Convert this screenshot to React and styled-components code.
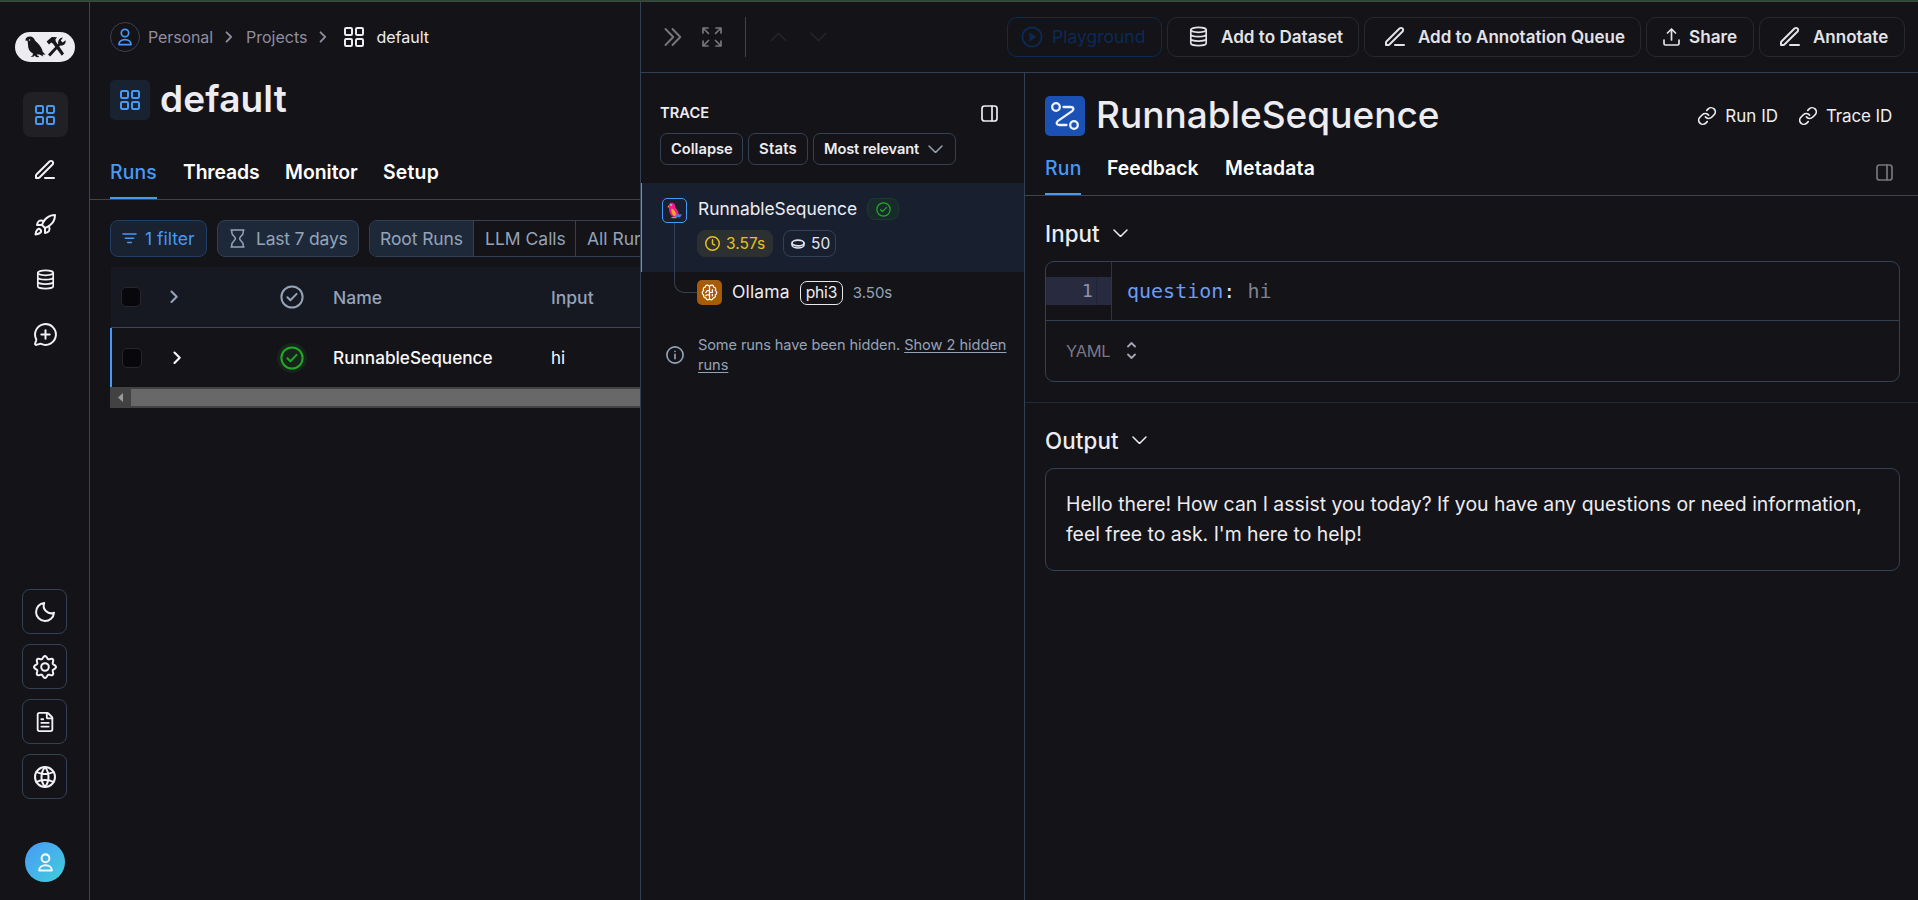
import React from "react";
import styled, { createGlobalStyle, css } from "styled-components";
import { Rocket, MessageCirclePlus, FileText } from "lucide-react";

const Global = createGlobalStyle`
  * { box-sizing: border-box; }
  body { margin: 0; background: #141317; color: #ececf1; overflow: hidden;
    font-family: Inter, "Liberation Sans", sans-serif; }
`;

const line = "#334155";
const blue = "#4799f8";
const slate = "#94a3b8";

/* ---------- shared ---------- */
const Svg = styled.svg`
  display: block; flex: none; fill: none; stroke: currentColor;
  stroke-linecap: round; stroke-linejoin: round;
  margin-left: ${p => p.$ml || 0}px;
`;
const Icon = ({ s = 24, vb = "0 0 24 24", w = 2, h, children, ...r }) => (
  <Svg width={s} height={h || s} viewBox={vb} strokeWidth={w} {...r}>{children}</Svg>
);
const GridIcon = p => (
  <Icon {...p}>
    {[[3, 3], [14, 3], [3, 14], [14, 14]].map(([x, y]) => <rect key={x + "-" + y} x={x} y={y} width="7" height="7" rx="1.2" />)}
  </Icon>
);
const PenIcon = p => (
  <Icon {...p}>
    <path d="M12 20H21M3 20H4.67C5.16 20 5.41 20 5.64 19.94C5.84 19.9 6.04 19.81 6.22 19.71C6.42 19.58 6.59 19.41 6.94 19.06L19.5 6.5C20.33 5.67 20.33 4.33 19.5 3.5C18.67 2.67 17.33 2.67 16.5 3.5L3.94 16.06C3.59 16.41 3.42 16.58 3.29 16.78C3.19 16.96 3.1 17.16 3.06 17.36C3 17.59 3 17.84 3 18.33V20Z" />
  </Icon>
);
const DbIcon = p => (
  <Icon w={1.9} {...p}>
    <ellipse cx="12" cy="4.4" rx="8.8" ry="2.8" />
    <path d="M3.2 4.4v15.2c0 1.5 3.9 2.8 8.8 2.8s8.8-1.3 8.8-2.8V4.4M3.2 9.4c0 1.5 3.9 2.8 8.8 2.8s8.8-1.3 8.8-2.8M3.2 14.5c0 1.5 3.9 2.8 8.8 2.8s8.8-1.3 8.8-2.8" />
  </Icon>
);
const UserIcon = p => (
  <Icon vb="0 0 14 18" w={1.7} {...p}>
    <circle cx="7" cy="5" r="3.7" />
    <path d="M1 16.6c0-3 2.5-4.9 6-4.9s6 1.9 6 4.9z" />
  </Icon>
);
const Chevron = ({ d = "right", ...p }) => {
  const paths = { down: "M1 1l6.5 6.5L14 1", up: "M1 7.5L7.5 1 14 7.5" };
  return d === "right"
    ? <Icon s={8.5} h={13.5} vb="0 0 8.5 13.5" w={2.1} {...p}><path d="M1.5 1.5l5.2 5.2-5.2 5.2" /></Icon>
    : <Icon s={15} h={8.5} vb="0 0 15 8.5" w={1.5} {...p}><path d={paths[d]} /></Icon>;
};
const CheckCircle = ({ s = 24, w = 2, ...p }) => (
  <Icon s={s} w={w} {...p}><circle cx="12" cy="12" r="10.6" /><path d="M7.4 12.3l3 3 6.2-6.4" /></Icon>
);
const LinkIcon = p => (
  <Icon {...p}>
    <path d="M10 13a5 5 0 0 0 7.54.54l3-3a5 5 0 0 0-7.07-7.07l-1.72 1.71" />
    <path d="M14 11a5 5 0 0 0-7.54-.54l-3 3a5 5 0 0 0 7.07 7.07l1.71-1.71" />
  </Icon>
);
const SplitIcon = p => (
  <Icon vb="0 0 17 17" w={1.7} s={17} {...p}><rect x="1" y="1" width="15" height="15" rx="2.6" /><path d="M11 1v15" /></Icon>
);
const gear = Array.from({ length: 97 }, (_, i) => {
  const t = (i / 96) * Math.PI * 2;
  const r = 9.7 + 1.3 * Math.cos(8 * t);
  return `${i ? "L" : "M"}${(12 + r * Math.cos(t)).toFixed(2)} ${(12 + r * Math.sin(t)).toFixed(2)}`;
}).join("") + "Z";

const Text = styled.span`
  white-space: nowrap;
  font-size: ${p => p.$s || 17.5}px;
  font-weight: ${p => p.$w || 400};
  letter-spacing: ${p => p.$ls || 0}px;
  color: ${p => p.$c || "inherit"};
  margin-left: ${p => p.$ml || 0}px;
`;
const Title = styled(Text)`line-height: 40px; padding-bottom: 2px;`;

/* ---------- frame ---------- */
const Page = styled.div`width: 1918px; height: 900px; display: flex; flex-direction: column; overflow: hidden; background: #141317;`;
const TopStrip = styled.div`height: 2px; flex: none; background: #2c4630; border-bottom: 1px solid #41464a;`;
const Shell = styled.div`flex: 1; display: flex; min-height: 0;`;

const Sidebar = styled.nav`
  width: 90px; flex: none; border-right: 1px solid #41434f; display: flex; flex-direction: column; align-items: center;
  padding-top: 30px; color: #f2f2f5;
`;
const NavItem = styled.div`
  width: 45px; height: 45px; border-radius: 8px; display: flex; align-items: center; justify-content: center; margin-bottom: 10px;
  ${p => p.$active && css`background: #212024; color: ${blue};`}
`;
const NavTop = styled.div`margin-top: 30px; padding-left: 1px;`;
const NavBottom = styled.div`margin-top: auto; display: flex; flex-direction: column; gap: 10px;`;
const SquareButton = styled.div`
  width: 45px; height: 45px; border: 1px solid ${line}; border-radius: 8px; display: flex; align-items: center; justify-content: center;
`;
const Avatar = styled.div`
  width: 40px; height: 40px; margin: 43px 0 18px 1px; border-radius: 50%; background: linear-gradient(135deg, #4a98f8, #3fd0da);
  display: flex; align-items: center; justify-content: center; color: #f4f8fb;
`;

/* ---------- project pane ---------- */
const Project = styled.main`width: 550px; flex: none; padding-left: 20px; overflow: hidden;`;
const Crumbs = styled.div`height: 30px; margin-top: 20px; display: flex; align-items: center; color: #8f8ea0;`;
const CrumbAvatar = styled.div`
  width: 30px; height: 30px; border-radius: 50%; border: 1px solid #3c4250; display: flex; align-items: center; justify-content: center; color: ${blue};
`;
const Heading = styled.div`height: 40px; margin-top: 28px; display: flex; align-items: center;`;
const HeadingIcon = styled.div`
  width: 40px; height: 40px; border-radius: 5px; display: flex; align-items: center; justify-content: center;
  background: ${p => p.$bg}; color: ${p => p.$c};
`;
const Tabs = styled.div`
  display: flex; gap: 26px; border-bottom: 1px solid #41434f; height: ${p => p.$h}px; margin: ${p => p.$m}; padding-left: 20px; color: #fff;
`;
const Tab = styled.div`
  width: ${p => p.$width}px; white-space: nowrap; font-size: 19.4px; font-weight: 600; line-height: ${p => p.$lh}px;
  letter-spacing: ${p => p.$ls || 0}px;
  ${p => p.$active && css`color: ${blue}; font-weight: 500; box-shadow: inset 0 -2px ${blue};`}
`;
const Filters = styled.div`display: flex; margin-top: 20px; height: 37px;`;
const FilterChip = styled.div`
  flex: none; width: ${p => p.$width}px; border-radius: 8px; display: flex; align-items: center; margin-right: 10px;
  border: 1px solid ${p => p.$blue ? "#1f3f66" : line}; background: ${p => p.$blue ? "#182230" : "#1d2938"};
  color: ${p => p.$blue ? blue : slate};
`;
const Segments = styled.div`display: flex; flex: none; border: 1px solid ${line}; border-radius: 8px; overflow: hidden; color: ${slate};`;
const Segment = styled.div`
  width: ${p => p.$width}px; flex: none; padding-left: ${p => p.$active ? 10 : 11}px; display: flex; align-items: center; border-right: 1px solid ${line};
  background: ${p => p.$active ? "#1d2938" : "transparent"};
`;
const Row = styled.div`
  display: flex; align-items: center; height: ${p => p.$head ? 61 : 59}px;
  ${p => p.$head
    ? css`margin: 10px 0 0 1px; padding-left: 10px; background: #161822; color: ${slate}; border-bottom: 1px solid #3a4560;`
    : css`padding-left: 10px; border-left: 2px solid ${blue}; color: #f8f8fa;`}
`;
const CheckBox = styled.div`width: 20px; height: 20px; border-radius: 5px; background: #08080c; border: 1px solid #26262b;`;
const Cell = styled.div`width: ${p => p.$width}px; flex: none; display: flex; align-items: center;`;
const StatusHalo = styled.div`
  width: 30px; height: 30px; border-radius: 50%; display: flex; align-items: center; justify-content: center;
  background: ${p => p.$on ? "#16241b" : "transparent"}; color: ${p => p.$on ? "#23a826" : slate};
`;
const ScrollTrack = styled.div`height: 21px; background: #424242; display: flex; align-items: center;`;
const ScrollThumb = styled.div`height: 17px; flex: 1; background: #686868; margin-left: 8px;`;

/* ---------- run panel ---------- */
const Panel = styled.section`flex: 1; min-width: 0; border-left: 1px solid ${line}; display: flex; flex-direction: column;`;
const Toolbar = styled.div`height: 71px; flex: none; border-bottom: 1px solid ${line}; display: flex; align-items: center; padding: 0 13px 1px 23px; color: #77767b;`;
const ToolSep = styled.div`width: 1px; height: 40px; background: #3b4455; margin: 0 24px 0 23px;`;
const Actions = styled.div`margin-left: auto; display: flex; gap: 5px;`;
const Action = styled.div`
  width: ${p => p.$width}px; height: 40px; border-radius: 10px; display: flex; align-items: center; padding-left: ${p => p.$pl}px;
  border: 1px solid ${p => p.$disabled ? "#0c2b55" : "#29282d"}; color: ${p => p.$disabled ? "#0b2a58" : "#e2e2e8"};
`;
const PanelBody = styled.div`flex: 1; display: flex; min-height: 0;`;
const Trace = styled.aside`width: 384px; flex: none; border-right: 1px solid ${line};`;
const TraceTitle = styled.div`display: flex; justify-content: space-between; align-items: center; height: 20px; margin: 30px 26px 0 19px;`;
const TraceButtons = styled.div`display: flex; gap: 5px; margin: 10px 0 0 19px;`;
const TraceButton = styled.div`width: ${p => p.$width}px; height: 32px; border: 1px solid ${line}; border-radius: 7px; display: flex; align-items: center; padding-left: 10px;`;
const Tree = styled.div`position: relative; margin-top: 18px;`;
const Branch = styled.div`
  position: absolute; left: 33px; top: 40px; width: 23px; height: 70px;
  border: solid ${line}; border-width: 0 0 1px 1px; border-bottom-left-radius: 10px;
`;
const SelectedRun = styled.div`height: 89px; background: #182030; border-left: 1px solid ${blue}; padding: 15px 0 0 20px; display: flex;`;
const RunInfo = styled.div`margin-left: 11px;`;
const Line = styled.div`display: flex; align-items: center; height: ${p => p.$h}px;`;
const RunName = styled(Text)`padding-bottom: 2px;`;
const RunIcon = styled.div`
  width: 25px; height: 25px; border-radius: 5px; display: flex; align-items: center; justify-content: center;
  ${p => p.$orange ? css`background: #a65b08; color: #fff;` : css`background: #1a2030; border: 1px solid ${blue};`}
`;
const OkPill = styled.div`
  width: 32px; height: 22px; margin-left: 10px; border-radius: 8px; background: #182a2c; border: 1px solid #1d3a2c; color: #23a826;
  display: flex; align-items: center; justify-content: center;
`;
const Pill = styled.div`
  width: ${p => p.$width}px; height: 27px; margin-right: 10px; border-radius: 8px; display: flex; align-items: center; padding-left: 7px;
  border: 1px solid ${p => p.$warn ? "#2c3030" : line}; background: ${p => p.$warn ? "#2c3030" : "transparent"}; color: ${p => p.$warn ? "#e6c21c" : "#e4e6ee"};
`;
const Pills = styled(Line)`margin-left: -1px;`;
const ChildRun = styled.div`display: flex; align-items: center; height: 25px; margin-top: 8px; padding-left: 56px;`;
const ModelTag = styled.div`width: 43px; height: 24px; margin-left: 10px; border: 1px solid #e8e8ee; border-radius: 7px; display: flex; align-items: center; padding-left: 5px;`;
const HiddenNote = styled.div`display: flex; align-items: center; margin: 30px 0 0 25px; color: ${slate};`;
const NoteText = styled.div`margin-left: 14px; font-size: 14.7px; line-height: 20px;`;
const Underlined = styled(Text)`text-decoration: underline; text-underline-offset: 2px;`;

const Detail = styled.article`flex: 1; min-width: 0;`;
const DetailHead = styled.div`display: flex; align-items: center; height: 40px; margin: 23px 26px 0 20px;`;
const Ids = styled.div`margin-left: auto; display: flex; align-items: center; color: #eeeef2;`;
const TabIcon = styled.div`margin: 15px 25px 0 auto; color: #77767b;`;
const Section = styled.div`padding: 0 18px 0 20px;`;
const SectionTitle = styled.div`display: flex; align-items: center; height: 30px; margin-top: ${p => p.$mt}px;`;
const CodeBox = styled.div`height: 121px; margin-top: 13px; border: 1px solid ${line}; border-radius: 9px; overflow: hidden;`;
const CodeArea = styled.div`height: 59px; display: flex; border-bottom: 1px solid ${line}; font-family: "DejaVu Sans Mono", monospace; font-size: 20px;`;
const Gutter = styled.div`width: 66px; border-right: 1px solid #34343c; padding-top: 15px;`;
const GutterLine = styled.div`height: 28px; line-height: 28px; font-size: 18.5px; width: 65px; background: linear-gradient(90deg, #282b40 50px, #22263a 50px, #22263a 51px, #282b40 51px); color: #8e92a4; text-align: right; padding-right: 18px;`;
const Code = styled.div`padding: 15px 0 0 15px; line-height: 28px; color: #7f8191; white-space: pre;`;
const Key = styled.span`color: #6c9cf4;`;
const Colon = styled.span`color: #d6dcf4;`;
const Format = styled.div`display: flex; align-items: center; height: 59px; padding-left: 20px; color: #787786;`;
const Divider = styled.div`height: 1px; background: #1e293b; margin-top: 20px;`;
const OutputBox = styled.div`height: 103px; margin-top: 13px; border: 1px solid ${line}; border-radius: 9px; padding: 20px; font-size: 19.4px; line-height: 30px;`;

export default function App() {
  return (
    <Page>
      <Global />
      <TopStrip />
      <Shell>
        <Sidebar>
          <Svg width="60" height="30" viewBox="0 0 60 30">
            <rect width="60" height="30" rx="15" fill="#ececf1" stroke="none" />
            <g fill="#17161b" stroke="none">
              <path d="M10.3 8.4C10.6 5.6 12.4 4.3 15 4.4C17.6 4.5 19.3 6 20 8.6C22.4 11 26.8 14.6 27.6 19.4L30.4 22.8L27.6 22.4L28.2 24.6L24.6 22.6L21.8 22.4L22.2 23.6L24 24L23.6 25.2L21 24.9L19.6 23.6L18.4 24.8H15.4L17.6 23.4L18 21.6C14.6 19.8 12.9 16.8 13 12.6L12.6 8.8Z" />
              <path d="M31.6 9.4L36.8 5L42 5.2L40.4 7.6L40.8 9.4L49 21.6L46.8 23.8L38 11.8L36.2 10.4L34 12.4Z" />
              <path d="M33 22.6L43.2 11.8C42.6 8.6 44.6 5.4 48 5.4L45.8 8.6L47.6 10.6L50.6 8.2C51.2 11.6 48.6 14 45.2 13.6L35.2 24.4Z" />
            </g>
            <circle cx="14.6" cy="8" r=".7" fill="#ececf1" stroke="none" />
          </Svg>
          <NavTop>
            <NavItem $active><GridIcon /></NavItem>
            <NavItem><PenIcon /></NavItem>
            <NavItem><Rocket size={24} /></NavItem>
            <NavItem><DbIcon s={21} /></NavItem>
            <NavItem><MessageCirclePlus size={25} strokeWidth={1.9} /></NavItem>
          </NavTop>
          <NavBottom>
            <SquareButton><Icon><path d="M11.2 3A9 9 0 1 0 21 12.8A7.6 7.6 0 0 1 11.2 3Z" /></Icon></SquareButton>
            <SquareButton><Icon><path d={gear} /><circle cx="12" cy="12" r="3.8" /></Icon></SquareButton>
            <SquareButton><FileText size={22} /></SquareButton>
            <SquareButton><Icon><circle cx="12" cy="12" r="10" /><path d="M12 2C7.3 8 7.3 16 12 22C16.7 16 16.7 8 12 2ZM3.4 7C8 9.6 16 9.6 20.6 7M3.4 17C8 14.4 16 14.4 20.6 17" /></Icon></SquareButton>
          </NavBottom>
          <Avatar><UserIcon s={15} h={19} w={1.9} /></Avatar>
        </Sidebar>

        <Project>
          <Crumbs>
            <CrumbAvatar><UserIcon s={14} h={18} /></CrumbAvatar>
            <Text $s={16} $ls={-0.11} $ml={8}>Personal</Text>
            <Chevron $ml={12} s={8} h={12} />
            <Text $s={16} $ml={13}>Projects</Text>
            <Chevron $ml={12} s={8} h={12} />
            <GridIcon color="#ececf1" $ml={15} />
            <Text $s={16} $ml={10} $c="#ececf1">default</Text>
          </Crumbs>
          <Heading>
            <HeadingIcon $bg="#182230" $c={blue}><GridIcon /></HeadingIcon>
            <Title $s={37} $w={600} $ls={0.15} $ml={10}>default</Title>
          </Heading>
          <Tabs $h={54} $m="26px 0 0 -20px">
            <Tab $width={47} $lh={52} $ls={0.16} $active>Runs</Tab>
            <Tab $width={76} $lh={52} $ls={-0.15}>Threads</Tab>
            <Tab $width={72} $lh={52}>Monitor</Tab>
            <Tab $width={60} $lh={52} $ls={0.22}>Setup</Tab>
          </Tabs>
          <Filters>
            <FilterChip $width={97} $blue>
              <Icon s={15} h={11} vb="0 0 15 11" w={1.5} $ml={11}><path d="M1 1h13M3.3 5.2h8.4M5.7 9.5h3.6" /></Icon>
              <Text $ml={8}>1 filter</Text>
            </FilterChip>
            <FilterChip $width={142}>
              <Icon s={15} h={19} vb="0 0 15 19" w={1.5} $ml={12}><path d="M1 1h13M1 18h13M1.8 1v2.4c0 3 3.6 4 3.6 6.1s-3.6 3.1-3.6 6.1V18M13.2 1v2.4c0 3-3.6 4-3.6 6.1s3.6 3.1 3.6 6.1V18" /></Icon>
              <Text $ls={-0.2} $ml={11}>Last 7 days</Text>
            </FilterChip>
            <Segments>
              <Segment $width={104} $active><Text $ls={-0.09}>Root Runs</Text></Segment>
              <Segment $width={102}><Text>LLM Calls</Text></Segment>
              <Segment $width={100}><Text>All Runs</Text></Segment>
            </Segments>
          </Filters>
          <Row $head>
            <Cell $width={49}><CheckBox /></Cell>
            <Cell $width={107}><Chevron /></Cell>
            <Cell $width={56}><StatusHalo><CheckCircle /></StatusHalo></Cell>
            <Cell $width={218}><Text $w={500}>Name</Text></Cell>
            <Text $w={500}>Input</Text>
          </Row>
          <Row>
            <Cell $width={51}><CheckBox /></Cell>
            <Cell $width={104}><Chevron /></Cell>
            <Cell $width={56}><StatusHalo $on><CheckCircle /></StatusHalo></Cell>
            <Cell $width={218}><Text $s={17.2} $w={500}>RunnableSequence</Text></Cell>
            <Text $s={17}>hi</Text>
          </Row>
          <ScrollTrack>
            <Svg width="5" height="9" viewBox="0 0 5 9" $ml={8}><path d="M5 0v9L0 4.5z" fill="#9a9a9a" stroke="none" /></Svg>
            <ScrollThumb />
          </ScrollTrack>
        </Project>

        <Panel>
          <Toolbar>
            <Icon s={18} h={20} vb="0 0 18 20" w={1.9}><path d="M1.5 2l7.8 8-7.8 8M8.5 2l7.8 8-7.8 8" /></Icon>
            <Icon s={20} vb="0 0 20 20" w={1.7} $ml={20}><path d="M1 6V1h5M1.5 1.5l5 5M14 1h5v5M18.5 1.5l-5 5M1 14v5h5M1.5 18.5l5-5M14 19h5v-5M18.5 18.5l-5-5" /></Icon>
            <ToolSep />
            <Chevron d="up" s={17} h={10} color="#242328" />
            <Chevron d="down" s={17} h={10} $ml={23} color="#242328" />
            <Actions>
              <Action $width={155} $pl={13} $disabled>
                <Icon s={22} w={2}><circle cx="12" cy="12" r="10.5" /><path d="M10 8l6 4-6 4z" fill="currentColor" strokeWidth="1" /></Icon>
                <Text $ml={9}>Playground</Text>
              </Action>
              <Action $width={192} $pl={20}><DbIcon s={21} /><Text $s={17.1} $w={600} $ml={12}>Add to Dataset</Text></Action>
              <Action $width={277} $pl={18}><PenIcon /><Text $s={17} $w={600} $ml={11}>Add to Annotation Queue</Text></Action>
              <Action $width={108} $pl={16}>
                <Icon s={17} h={18} vb="0 0 17 18" w={1.7}><path d="M1 12v3.5c0 1 .6 1.5 1.5 1.5h12c.9 0 1.5-.5 1.5-1.5V12M8.5 12V1.5M4.5 5l4-4 4 4" /></Icon>
                <Text $s={17.2} $w={600} $ml={9}>Share</Text>
              </Action>
              <Action $width={146} $pl={18}><PenIcon /><Text $s={17} $w={600} $ml={11}>Annotate</Text></Action>
            </Actions>
          </Toolbar>
          <PanelBody>
            <Trace>
              <TraceTitle><Text $s={14.7} $w={600}>TRACE</Text><SplitIcon /></TraceTitle>
              <TraceButtons>
                <TraceButton $width={83}><Text $s={14.7} $w={600}>Collapse</Text></TraceButton>
                <TraceButton $width={60}><Text $s={14.9} $w={600} $ls={0.2}>Stats</Text></TraceButton>
                <TraceButton $width={143}><Text $s={14.7} $w={600} $ls={-0.15}>Most relevant</Text><Chevron d="down" $ml={9} color={slate} /></TraceButton>
              </TraceButtons>
              <Tree>
                <SelectedRun>
                  <RunIcon>
                    <Svg width="15" height="17" viewBox="0 0 15 17">
                      <g stroke="none">
                        <path d="M2 5.5C1 2 3 .6 5 .8c2.5.2 3.3 2.2 3.2 4.5 1.3 2 3.8 4.2 3.6 7.5l3-.3-1.5 2.500-5.600.2C4 14.500 2 11 2 5.500z" fill="#ee1e8c" />
                        <path d="M4.5 6.5c3 1 4.5 4 4.8 7l-2 .8C4.8 12.5 4 9.5 4.5 6.5z" fill="#f5a623" />
                        <path d="M1.8 3.2L.3 5.2l1.9.3z" fill="#f5a623" />
                        <path d="M8.5 12.5l6.3.1-2 2.8-4.5-.6z" fill="#2d8fe8" />
                        <path d="M4.5 15h5v1.2h-5z" fill="#e8901e" />
                        <circle cx="4" cy="3" r="1" fill="#8fc9d8" />
                      </g>
                    </Svg>
                  </RunIcon>
                  <RunInfo>
                    <Line $h={22}><RunName $s={17.4} $ls={-0.03}>RunnableSequence</RunName><OkPill><CheckCircle s={15} w={2} /></OkPill></Line>
                    <Pills $h={47}>
                      <Pill $width={76} $warn><Icon s={15} w={2.4}><circle cx="12" cy="12" r="10.8" /><path d="M12 6v6.5l3.5 2" /></Icon><Text $ml={6} $s={15.5}>3.57s</Text></Pill>
                      <Pill $width={53}><Icon s={14} h={10} vb="0 0 14 10" w={1.6}><ellipse cx="7" cy="4" rx="6" ry="2.9" /><path d="M1 4v2c0 1.7 2.7 3 6 3s6-1.3 6-3V4" /></Icon><Text $ml={6} $s={15.5}>50</Text></Pill>
                    </Pills>
                  </RunInfo>
                </SelectedRun>
                <ChildRun>
                  <RunIcon $orange>
                    <Icon s={17} h={17} vb="0 0 18 18" w={1.3}>
                      <path d="M9 2.5C7.5.3 4.5 1 4.5 3.3 2.5 3.5 2 5.5 2.8 6.8.8 8 .8 10.5 2.8 11.5c-.4 2 .8 3.3 2.3 3.2C5.7 17.3 8.3 17.3 9 15.5zM9 2.5c1.5-2.2 4.5-1.5 4.5.8 2 .2 2.5 2.2 1.7 3.5 2 1.2 2 3.7 0 4.7.4 2-.8 3.3-2.3 3.2-.6 2.6-3.2 2.6-3.9.8M9 7H6.5M9 11.5H6.5M5 9.2l1.5-2M12 6v3h-3M12 12.5V11M5 12.5l1.5-1" />
                    </Icon>
                  </RunIcon>
                  <RunName $ml={10} $s={17.5} $ls={0.15}>Ollama</RunName>
                  <ModelTag><Text $s={15.6} $ls={-0.2}>phi3</Text></ModelTag>
                  <Text $ml={10} $s={15} $c={slate}>3.50s</Text>
                </ChildRun>
                <Branch />
              </Tree>
              <HiddenNote>
                <Icon s={18} h={18} w={2.2}><circle cx="12" cy="12" r="10.8" /><path d="M12 11v6M12 7.2v.1" /></Icon>
                <NoteText><Text $s={14.6} $ls={-0.12}>Some runs have been hidden.</Text> <Underlined $s={14.6} $ls={-0.03}>Show 2 hidden<br />runs</Underlined></NoteText>
              </HiddenNote>
            </Trace>
            <Detail>
              <DetailHead>
                <HeadingIcon $bg="#1b51b5" $c="#eef2fc">
                  <Icon s={28} vb="0 0 28 28" w={2.3}><circle cx="5" cy="5" r="3.8" /><circle cx="23" cy="23" r="3.8" /><path d="M12.5 5h7.200c3 0 3.600 2.200 1.400 4.100L7 18.900C4.800 20.800 5.400 23 8.300 23h7.200" /></Icon>
                </HeadingIcon>
                <Title $s={37} $w={500} $ml={11}>RunnableSequence</Title>
                <Ids>
                  <LinkIcon s={20} /><Text $s={17} $ml={8}>Run ID</Text>
                  <LinkIcon s={20} $ml={20} /><Text $s={17} $ls={-0.15} $ml={8}>Trace ID</Text>
                </Ids>
              </DetailHead>
              <Tabs $h={47} $m="13px 0 0 0">
                <Tab $width={36} $lh={38} $ls={0.3} $active>Run</Tab>
                <Tab $width={92} $lh={38}>Feedback</Tab>
                <Tab $width={90} $lh={38} $ls={0.16}>Metadata</Tab>
                <TabIcon><SplitIcon /></TabIcon>
              </Tabs>
              <Section>
                <SectionTitle $mt={22}><Text $s={22.3} $w={500} $ls={0.1}>Input</Text><Chevron d="down" $ml={13} /></SectionTitle>
                <CodeBox>
                  <CodeArea>
                    <Gutter><GutterLine>1</GutterLine></Gutter>
                    <Code><Key>question</Key><Colon>:</Colon> hi</Code>
                  </CodeArea>
                  <Format>
                    <Text $s={16.5} $ls={-0.3}>YAML</Text>
                    <Icon s={9} h={17} vb="0 0 9 17" w={1.8} $ml={17} color="#a5a4b2"><path d="M1 4.5L4.5 1 8 4.5M1 12.5L4.5 16 8 12.5" /></Icon>
                  </Format>
                </CodeBox>
              </Section>
              <Divider />
              <Section>
                <SectionTitle $mt={22}><Text $s={22.3} $w={500} $ls={0.15}>Output</Text><Chevron d="down" $ml={13} /></SectionTitle>
                <OutputBox>
                  Hello there! How can I assist you today? If you have any questions or need information,<br />
                  feel free to ask. I'm here to help!
                </OutputBox>
              </Section>
            </Detail>
          </PanelBody>
        </Panel>
      </Shell>
    </Page>
  );
}
